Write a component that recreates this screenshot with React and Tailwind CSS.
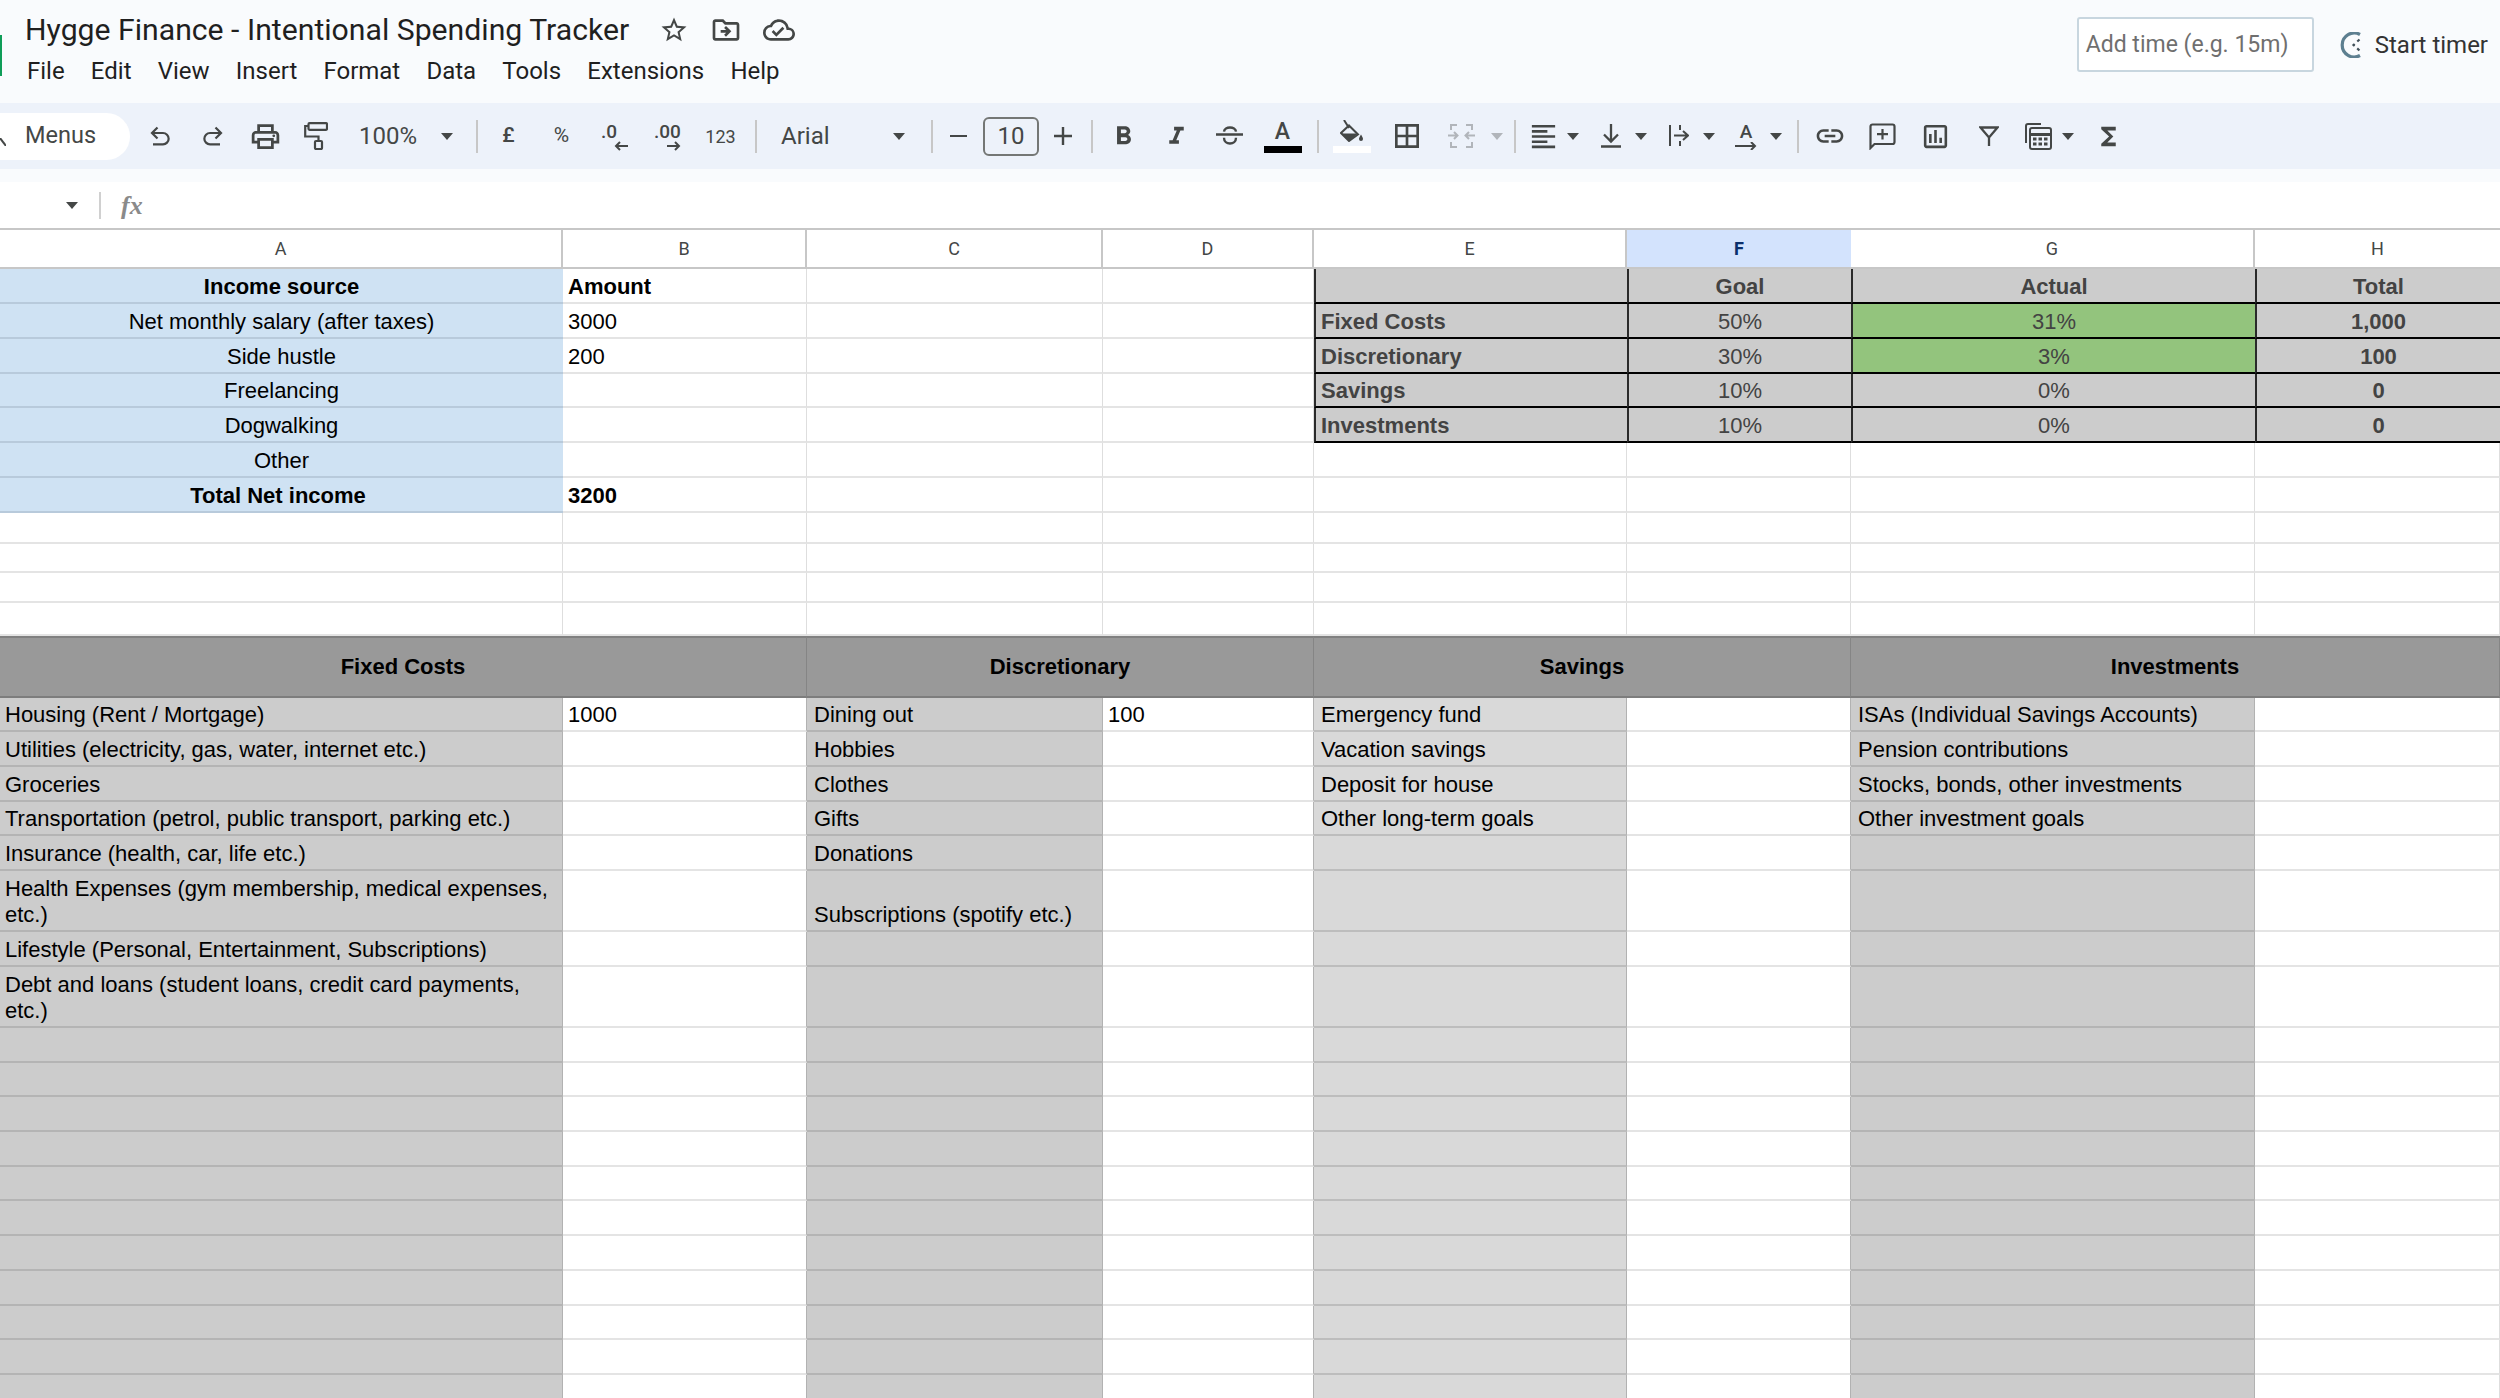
import React from 'react';
import {
  MdStarBorder, MdOutlineDriveFileMove, MdOutlineCloudDone, MdOutlinePrint,
  MdFormatBold, MdFormatItalic, MdBorderAll, MdFormatAlignLeft,
  MdLink, MdOutlineInsertChart, MdFunctions,
} from 'react-icons/md';

const gridCols = 'grid grid-cols-[563px_244px_296px_211px_313px_224px_404px_245px]';

const menus = ['File', 'Edit', 'View', 'Insert', 'Format', 'Data', 'Tools', 'Extensions', 'Help'];

const Caret = ({ className = 'text-[#444746]' }) => (
  <svg viewBox="0 0 12 7" className={`w-[12px] h-[7px] fill-current ${className}`}>
    <path d="M0 0h12L6 7z" />
  </svg>
);

const Sep = () => <div className="w-[2px] h-[33px] bg-[#c7c7c7]" />;

const Btn = ({ className = 'w-[53px]', children }) => (
  <div className={`h-full flex items-center justify-center text-[#444746] shrink-0 ${className}`}>{children}</div>
);

const CaretBox = () => (
  <div className="w-[14px] flex justify-center shrink-0"><Caret /></div>
);

const UndoIcon = () => (
  <svg viewBox="0 0 20 20" className="w-[20px] h-[20px] fill-none stroke-current stroke-[2.2]">
    <path d="M7.5 1.5L2 7l5.5 5.5M2 7h11a5.6 5.6 0 0 1 0 11.3H3" />
  </svg>
);

const RedoIcon = () => (
  <svg viewBox="0 0 20 20" className="w-[20px] h-[20px] fill-none stroke-current stroke-[2.2]">
    <path d="M12.5 1.5L18 7l-5.5 5.5M18 7H7a5.6 5.6 0 0 0 0 11.3h10" />
  </svg>
);

const PaintIcon = () => (
  <svg viewBox="0 0 24 28" className="w-[24px] h-[28px] -ml-[5px] fill-none stroke-current stroke-[2.2]">
    <rect x="4.5" y="1.2" width="18.5" height="6.6" rx="1" />
    <path d="M4.5 4H1.2v10.5H14.5V19" />
    <rect x="11" y="19" width="7" height="8" rx="1" />
  </svg>
);

const StrikeIcon = () => (
  <svg viewBox="0 0 27 20" className="w-[27px] h-[20px] fill-none stroke-current stroke-[2.4]">
    <path d="M0 8.5h27M8 5.7C8.500 0 19.500 0 20 5.700M8 11.700C8 19.500 20 19.500 20 11.700" />
  </svg>
);

const FillIcon = () => (
  <svg viewBox="0 0 24 22" className="w-[24px] h-[22px]">
    <path d="M4 0l5 8M9 5.500l9 9-9 6.500-8-8z" className="stroke-current stroke-2 fill-none" />
    <path d="M1 13.500h17l-9 7.500z" className="fill-current" />
    <path d="M21 14.500c-1 2-2 3-2 4.500a2 2 0 0 0 4 0c0-1.500-1-2.500-2-4.500z" className="fill-current" />
  </svg>
);

const MergeIcon = () => (
  <svg viewBox="0 0 27 24" className="w-[27px] h-[24px] fill-none stroke-[#b1b5ba] stroke-2">
    <path d="M9 1H3v5M18 1h6v5M9 23H3v-5M18 23h6v-5" />
    <path d="M0 11.500h9M6 8l3.500 3.500L6 15M27 11.500h-9M21 8l-3.500 3.500L21 15" />
  </svg>
);

const ValignIcon = () => (
  <svg viewBox="0 0 20 24" className="w-[20px] h-[24px] fill-none stroke-current stroke-[2.3]">
    <path d="M10 0v17M3 10.500l7 7 7-7M0 22.500h20" />
  </svg>
);

const WrapIcon = () => (
  <svg viewBox="0 0 20 22" className="w-[20px] h-[22px] fill-none stroke-current stroke-2">
    <path d="M1 0v21M11 0v5M11 16v5M5 10.500h14M14 6l5 4.500-5 4.500" />
  </svg>
);

const CommentIcon = () => (
  <svg viewBox="0 0 27 27" className="w-[27px] h-[27px] fill-none stroke-current stroke-[2.2]">
    <path d="M1.500 25V3.500a2 2 0 0 1 2-2h20a2 2 0 0 1 2 2V19a2 2 0 0 1-2 2H5.500z" />
    <path d="M13.500 6v10.500M8 11.200h11" />
  </svg>
);

const CalcIcon = () => (
  <svg viewBox="0 0 27 27" className="w-[27px] h-[27px] fill-none stroke-current stroke-2">
    <path d="M16 1H3a2 2 0 0 0-2 2v17" />
    <rect x="5" y="5" width="21" height="21" rx="2" />
    <path d="M5 11.500h21" className="stroke-[3]" />
    <path d="M8 16h3.500M13.500 16H17M19 16h3.500M8 21h3.500M13.500 21H17M19 21h3.500" className="stroke-[3]" />
  </svg>
);

const FilterIcon = () => (
  <svg viewBox="0 0 20 20" className="w-[20px] h-[20px] fill-none stroke-current stroke-[2.3]">
    <path d="M1.500 1.500h17L10 11.500zM10 11.500V20" />
  </svg>
);

const TimerIcon = () => (
  <svg viewBox="0 0 22 26" className="w-[22px] h-[26px] fill-none">
    <path d="M20 2.500A12 12 0 1 0 20 23.500" className="stroke-[#5d7f90] stroke-[3.2]" />
    <path d="M19.500 7.500L13.500 13l6 5.500" className="stroke-[#3f4f58] stroke-[2.2]" strokeDasharray="3 3.600" />
  </svg>
);

const Header = () => (
  <div className="h-[103px] flex bg-[#f9fbfd] font-[Roboto]">
    <div className="w-[2px] h-[41px] mt-[35px] bg-[#0f9d58]" />
    <div className="ml-[23px] flex-1">
      <div className="flex items-center h-[57px] pt-[2px]">
        <span className="text-[30.200px] leading-[38px] text-[#1f1f1f] whitespace-nowrap">Hygge Finance - Intentional Spending Tracker</span>
        <div className="flex items-center ml-[30px] gap-[21px] text-[#444746]">
          <MdStarBorder size={30} />
          <MdOutlineDriveFileMove size={32} />
          <MdOutlineCloudDone size={32} />
        </div>
      </div>
      <div className="flex gap-[26.200px] text-[24px] leading-[28px] text-[#1f1f1f] pl-[2px]">
        {menus.map((m) => <span key={m}>{m}</span>)}
      </div>
    </div>
    <div className="flex items-start pt-[17px] pr-[12px]">
      <div className="w-[237px] h-[55px] bg-white border-2 border-[#c8d6df] rounded-[3px] flex items-center pl-[7px] pt-[2px] text-[23px] text-[#6f6f6f]">
        Add time (e.g. 15m)
      </div>
      <div className="flex items-center h-[55px] ml-[26px] gap-[13px] text-[24px] text-[#333]">
        <TimerIcon />
        <span>Start timer</span>
      </div>
    </div>
  </div>
);

const Toolbar = () => (
  <div className="h-[66px] flex items-center bg-[#edf2fa] font-[Roboto] text-[#444746]">
    <div className="w-[130px] h-[47px] bg-white rounded-r-[24px] flex items-center shrink-0">
      <svg viewBox="0 0 6 8" className="w-[6px] h-[8px] mt-[11px] stroke-[#444746] stroke-2"><path d="M0 0l6 8" /></svg>
      <span className="ml-[19px] text-[23.500px]">Menus</span>
    </div>
    <div className="ml-[3px] flex h-full">
      <Btn><UndoIcon /></Btn>
      <Btn><RedoIcon /></Btn>
      <Btn><MdOutlinePrint size={33} /></Btn>
      <Btn><PaintIcon /></Btn>
    </div>
    <div className="w-[131px] flex items-center justify-between pl-[14px] pr-[23px] text-[24px]">
      <span>100%</span>
      <Caret />
    </div>
    <Sep />
    <div className="ml-[4px] flex h-full">
      <Btn><span className="text-[21px] font-medium">£</span></Btn>
      <Btn><span className="text-[21px]">%</span></Btn>
      <Btn>
        <div className="flex flex-col items-start">
          <span className="text-[19px] leading-[22px] font-medium">.0</span>
          <svg viewBox="0 0 14 10" className="w-[14px] h-[10px] ml-[13px] -mt-[2px] fill-none stroke-current stroke-2"><path d="M14 5H2M6 1L2 5l4 4" /></svg>
        </div>
      </Btn>
      <Btn>
        <div className="flex flex-col items-start">
          <span className="text-[19px] leading-[22px] font-medium">.00</span>
          <svg viewBox="0 0 14 10" className="w-[14px] h-[10px] ml-[13px] -mt-[2px] fill-none stroke-current stroke-2"><path d="M0 5h12M8 1l4 4-4 4" /></svg>
        </div>
      </Btn>
      <Btn><span className="text-[18px]">123</span></Btn>
    </div>
    <div className="ml-[8px]"><Sep /></div>
    <div className="ml-[24px] w-[124px] flex items-center justify-between text-[24px] shrink-0">
      <span>Arial</span>
      <Caret />
    </div>
    <div className="ml-[26px]"><Sep /></div>
    <Btn className="w-[50px]">
      <div className="w-[17px] h-[2.500px] bg-[#444746]" />
    </Btn>
    <div className="w-[56px] h-[39px] border-2 border-[#747775] rounded-[6px] flex items-center justify-center text-[24px] shrink-0">10</div>
    <Btn className="w-[48px]">
      <svg viewBox="0 0 18 18" className="w-[18px] h-[18px] stroke-current stroke-[2.400]"><path d="M9 0v18M0 9h18" /></svg>
    </Btn>
    <div className="ml-[4px]"><Sep /></div>
    <div className="ml-[4px] flex h-full">
      <Btn><MdFormatBold size={31} /></Btn>
      <Btn><MdFormatItalic size={29} /></Btn>
      <Btn><StrikeIcon /></Btn>
      <Btn>
        <div className="flex flex-col items-center">
          <span className="text-[23px] leading-[23px] font-medium">A</span>
          <div className="w-[38px] h-[7px] mt-[3px] bg-black" />
        </div>
      </Btn>
    </div>
    <div className="ml-[8px]"><Sep /></div>
    <div className="ml-[6px] flex h-full">
      <Btn>
        <div className="flex flex-col items-center">
          <FillIcon />
          <div className="w-[38px] h-[7px] mt-[4px] bg-white" />
        </div>
      </Btn>
      <Btn className="w-[57px]"><MdBorderAll size={32} /></Btn>
      <Btn className="w-[52px]"><MergeIcon /></Btn>
      <div className="w-[20px] flex justify-center items-center"><Caret className="text-[#b1b5ba]" /></div>
    </div>
    <div className="ml-[7px]"><Sep /></div>
    <div className="ml-[4px] flex h-full items-center">
      <Btn className="w-[46px]"><MdFormatAlignLeft size={31} /></Btn>
      <CaretBox />
      <Btn className="w-[46px] ml-[8px]"><ValignIcon /></Btn>
      <CaretBox />
      <Btn className="w-[46px] ml-[8px]"><WrapIcon /></Btn>
      <CaretBox />
      <Btn className="w-[46px] ml-[7px]">
        <div className="flex flex-col items-center">
          <span className="text-[19px] leading-[18px] font-medium">A</span>
          <svg viewBox="0 0 22 8" className="w-[22px] h-[8px] mt-[1px] fill-none stroke-current stroke-2"><path d="M0 4h20M16 0l4 4-4 4" /></svg>
        </div>
      </Btn>
      <CaretBox />
    </div>
    <div className="ml-[14px]"><Sep /></div>
    <div className="ml-[4px] flex h-full items-center">
      <Btn><MdLink size={32} /></Btn>
      <Btn><CommentIcon /></Btn>
      <Btn><MdOutlineInsertChart size={31} /></Btn>
      <Btn><FilterIcon /></Btn>
      <Btn className="w-[46px]"><CalcIcon /></Btn>
      <CaretBox />
      <Btn className="w-[53px] ml-[7px]"><MdFunctions size={29} /></Btn>
    </div>
  </div>
);

const FormulaBar = () => (
  <>
    <div className="h-[13px] bg-[#f9fbfd]" />
    <div className="h-[46px] bg-white flex items-center border-b-2 border-[#c7c7c7] box-content">
      <div className="ml-[66px]"><Caret /></div>
      <div className="ml-[21px] w-[2px] h-[27px] bg-[#d0d0d0]" />
      <span className="ml-[20px] font-['Liberation_Serif'] italic text-[26px] text-[#8a8a8a] font-bold">fx</span>
    </div>
  </>
);

const ColumnHeaders = () => (
  <div className={`${gridCols} h-[39px] bg-white font-[Roboto] text-[18px] text-[#444746]`}>
    {['A', 'B', 'C', 'D', 'E', 'F', 'G', 'H'].map((c) => (
      <div
        key={c}
        className={
          c === 'F'
            ? 'flex items-center justify-center bg-[#d3e3fd] text-[#0b2f6b] font-bold border-b-2 border-[#c7c7c7]'
            : c === 'H'
              ? 'flex items-center justify-center border-b-2 border-[#c7c7c7]'
              : 'flex items-center justify-center border-b-2 border-r-2 border-[#c7c7c7]'
        }
      >
        {c}
      </div>
    ))}
  </div>
);

const rowHeights = 'grid-rows-[35px_35px_35px_34px_35px_35px_35px_31px_29px_30px_33px_62px_34px_35px_35px_34px_35px_61px_35px_61px_35px_34px_35px_35px_34px_35px_35px_35px_34px_35px_35px]';

const base = 'flex items-end pb-[2px] px-[5px] min-w-0';
const white = `${base} bg-white border-b-2 border-b-[#e4e4e4] border-r border-r-[#dedede]`;
const whiteEdge = `${base} bg-white border-b-2 border-b-[#e4e4e4] border-r border-r-[#b2b2b2]`;
const blue = `${base} justify-center bg-[#cfe2f3] border-b-2 border-b-[#b8cadb]`;
const gray = `${base} bg-[#cccccc] border-b-2 border-b-[#b4b4b4] border-r border-r-[#b2b2b2]`;
const pale = `${base} bg-[#d9d9d9] border-b-2 border-b-[#bdbdbd] border-r border-r-[#b2b2b2]`;
const dark = 'col-span-2 flex items-center justify-center font-bold bg-[#999999] border-t-2 border-t-[#808080] border-b-2 border-b-[#7d7d7d] border-r border-r-[#858585]';
const summary = `${base} text-[#434343] bg-[#cccccc] border-b-2 border-b-black border-l-2 border-l-[#2a2a2a]`;
const green = `${base} text-[#434343] bg-[#93c47d] border-b-2 border-b-black border-l-2 border-l-[#2a2a2a]`;

const income = [
  ['Income source', 'Amount', true],
  ['Net monthly salary (after taxes)', '3000'],
  ['Side hustle', '200'],
  ['Freelancing', ''],
  ['Dogwalking', ''],
  ['Other', ''],
  ['Total Net income', '3200', true],
  ['', ''],
  ['', ''],
  ['', ''],
  ['', ''],
];

const goals = [
  ['', 'Goal', 'Actual', 'Total'],
  ['Fixed Costs', '50%', '31%', '1,000'],
  ['Discretionary', '30%', '3%', '100'],
  ['Savings', '10%', '0%', '0'],
  ['Investments', '10%', '0%', '0'],
];

const spending = [
  ['Housing (Rent / Mortgage)', '1000', 'Dining out', '100', 'Emergency fund', 'ISAs (Individual Savings Accounts)'],
  ['Utilities (electricity, gas, water, internet etc.)', '', 'Hobbies', '', 'Vacation savings', 'Pension contributions'],
  ['Groceries', '', 'Clothes', '', 'Deposit for house', 'Stocks, bonds, other investments'],
  ['Transportation (petrol, public transport, parking etc.)', '', 'Gifts', '', 'Other long-term goals', 'Other investment goals'],
  ['Insurance (health, car, life etc.)', '', 'Donations', '', '', ''],
  ['Health Expenses (gym membership, medical expenses, etc.)', '', 'Subscriptions (spotify etc.)', '', '', ''],
  ['Lifestyle (Personal, Entertainment, Subscriptions)', '', '', '', '', ''],
  ['Debt and loans (student loans, credit card payments, etc.)', '', '', '', '', ''],
  ...Array.from({ length: 11 }, () => ['', '', '', '', '', '']),
];

const Sheet = () => (
  <div className={`${gridCols} ${rowHeights} font-['Liberation_Sans'] text-[22px] leading-[26px] text-black`}>
    {income.map(([label, amount, bold], i) => (
      <React.Fragment key={i}>
        {i < 7 ? (
          <div className={`${blue} ${bold ? 'font-bold' : ''} ${label === 'Total Net income' ? 'pr-[12px]' : ''}`}>{label}</div>
        ) : (
          <div className={white} />
        )}
        <div className={`${white} ${bold ? 'font-bold' : ''}`}>{amount}</div>
        <div className={white} />
        <div className={white} />
        {i < goals.length ? (
          <>
            <div className={`${summary} font-bold`}>{goals[i][0]}</div>
            <div className={`${summary} justify-center ${i === 0 ? 'font-bold' : ''}`}>{goals[i][1]}</div>
            <div className={`${i === 1 || i === 2 ? green : summary} justify-center ${i === 0 ? 'font-bold' : ''}`}>{goals[i][2]}</div>
            <div className={`${summary} justify-center font-bold`}>{goals[i][3]}</div>
          </>
        ) : (
          <>
            <div className={white} />
            <div className={white} />
            <div className={white} />
            <div className={white} />
          </>
        )}
      </React.Fragment>
    ))}
    <div className={dark}>Fixed Costs</div>
    <div className={dark}>Discretionary</div>
    <div className={dark}>Savings</div>
    <div className={dark}>Investments</div>
    {spending.map(([fixed, fixedAmt, disc, discAmt, sav, inv], i) => (
      <React.Fragment key={i}>
        <div className={gray}><span>{fixed}</span></div>
        <div className={whiteEdge}>{fixedAmt}</div>
        <div className={`${gray} pl-[7px]`}>{disc}</div>
        <div className={whiteEdge}>{discAmt}</div>
        <div className={`${pale} pl-[7px]`}>{sav}</div>
        <div className={whiteEdge} />
        <div className={`${gray} pl-[7px]`}>{inv}</div>
        <div className={white} />
      </React.Fragment>
    ))}
  </div>
);

export default function App() {
  return (
    <div className="w-[2500px] h-[1398px] overflow-hidden bg-white">
      <Header />
      <Toolbar />
      <FormulaBar />
      <ColumnHeaders />
      <Sheet />
    </div>
  );
}
